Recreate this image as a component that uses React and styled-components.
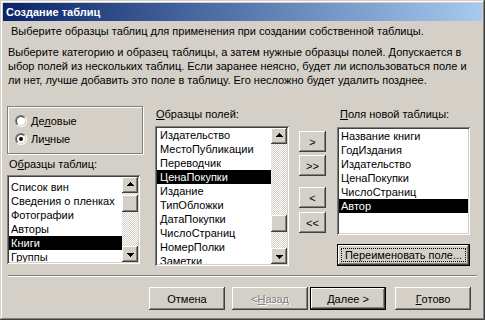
import React from "react";
import styled, { createGlobalStyle, css } from "styled-components";

const GlobalStyle = createGlobalStyle`
  html, body {
    margin: 0;
    padding: 0;
    background: #d4d0c8;
  }
  body {
    font-family: "Liberation Sans", Arial, sans-serif;
    font-size: 11px;
    color: #000;
  }
`;

const raised = css`
  box-shadow: inset -1px -1px #404040, inset 1px 1px #fff,
    inset -2px -2px #808080, inset 2px 2px #d4d0c8;
`;

const sunken = css`
  box-shadow: inset 1px 1px #808080, inset -1px -1px #fff,
    inset 2px 2px #404040, inset -2px -2px #d4d0c8;
`;

const Window = styled.div`
  width: 485px;
  height: 320px;
  box-sizing: border-box;
  padding: 3px;
  background: #d4d0c8;
  box-shadow: inset -1px -1px #404040, inset 1px 1px #d4d0c8,
    inset -2px -2px #808080, inset 2px 2px #fff;
  display: flex;
  flex-direction: column;
`;

const TitleBar = styled.div`
  height: 18px;
  flex-shrink: 0;
  display: flex;
  align-items: center;
  padding-left: 3px;
  background: linear-gradient(to right, #0a246a, #a6caf0);
  color: #fff;
  font-weight: bold;
  font-size: 11px;
`;

const Header = styled.div`
  padding: 4px 0 0 8px;
  line-height: 13px;
`;

const Intro = styled.div`
  margin-top: 7px;
  padding-left: 5px;
  line-height: 14px;
`;

const Line = styled.div`
  white-space: nowrap;
`;

const Main = styled.div`
  display: flex;
  align-items: flex-start;
  margin-top: 19px;
  padding-left: 4px;
`;

const Column = styled.div`
  display: flex;
  flex-direction: column;
  width: ${(p) => p.$width}px;
  margin-left: ${(p) => p.$offset || 0}px;
  margin-top: ${(p) => p.$top || 0}px;
`;

const GroupBox = styled.div`
  height: 48px;
  box-sizing: border-box;
  border: 1px solid #808080;
  box-shadow: inset 1px 1px #fff, 1px 1px #fff;
  padding: 5px 0 0 7px;
  display: flex;
  flex-direction: column;
`;

const RadioRow = styled.label`
  height: 18px;
  display: flex;
  align-items: center;
  gap: 4px;
`;

const RadioOuter = styled.span`
  width: 12px;
  height: 12px;
  box-sizing: border-box;
  border-radius: 50%;
  border: 1px solid;
  border-color: #808080 #fff #fff #808080;
  display: flex;
`;

const RadioInner = styled.span`
  flex: 1;
  border-radius: 50%;
  border: 1px solid;
  border-color: #404040 #d4d0c8 #d4d0c8 #404040;
  background: #fff;
  display: flex;
  align-items: center;
  justify-content: center;
  &::after {
    content: "";
    width: 4px;
    height: 4px;
    border-radius: 50%;
    background: ${(p) => (p.$checked ? "#000" : "transparent")};
  }
`;

const FieldLabel = styled.div`
  line-height: 13px;
  margin: ${(p) => p.$margin || "0"};
  padding-left: ${(p) => p.$indent || 0}px;
`;

const ListBox = styled.div`
  ${sunken};
  background: #fff;
  box-sizing: border-box;
  padding: 2px;
  height: ${(p) => p.$height}px;
  display: flex;
`;

const Items = styled.div`
  flex: 1;
  overflow: hidden;
  padding-top: ${(p) => p.$shift || 0}px;
`;

const Item = styled.div`
  height: 14px;
  line-height: 14px;
  padding-left: ${(p) => p.$indent || 2}px;
  white-space: nowrap;
  background: ${(p) => (p.$selected ? "#000" : "transparent")};
  color: ${(p) => (p.$selected ? "#fff" : "#000")};
`;

const ScrollBar = styled.div`
  width: 16px;
  flex-shrink: 0;
  display: flex;
  flex-direction: column;
`;

const ArrowButton = styled.div`
  ${raised};
  background: #d4d0c8;
  width: 16px;
  height: 16px;
  flex-shrink: 0;
  display: flex;
  align-items: center;
  justify-content: center;
`;

const Track = styled.div`
  flex: 1;
  background-image: conic-gradient(
    #fff 25%,
    #d4d0c8 0 50%,
    #fff 0 75%,
    #d4d0c8 0
  );
  background-size: 2px 2px;
`;

const Thumb = styled.div`
  ${raised};
  background: #d4d0c8;
  height: 17px;
  margin-top: ${(p) => p.$offset}px;
`;

const Arrow = ({ down }) => (
  <svg width="7" height="4" viewBox="0 0 7 4" shapeRendering="crispEdges"
    style={{ transform: down ? "translateY(1px) rotate(180deg)" : "translateY(-1px)" }}>
    <rect x="3" y="0" width="1" height="1" fill="#000" />
    <rect x="2" y="1" width="3" height="1" fill="#000" />
    <rect x="1" y="2" width="5" height="1" fill="#000" />
    <rect x="0" y="3" width="7" height="1" fill="#000" />
  </svg>
);

const Button = styled.button`
  ${raised};
  appearance: none;
  border: none;
  margin: 0;
  padding: 0;
  background: #d4d0c8;
  font-family: inherit;
  font-size: 11px;
  color: #000;
  width: ${(p) => (p.$width ? `${p.$width}px` : "100%")};
  height: ${(p) => p.$height || 23}px;
  display: flex;
  align-items: center;
  justify-content: center;
  margin-left: ${(p) => p.$gap || 0}px;
  margin-top: ${(p) => p.$top || 0}px;
  ${(p) =>
    p.$default &&
    css`
      box-shadow: inset 0 0 0 1px #000, inset -2px -2px #404040,
        inset 2px 2px #fff, inset -3px -3px #808080;
    `}
  ${(p) =>
    p.disabled &&
    css`
      color: #808080;
      text-shadow: 1px 1px #fff;
    `}
`;

const FocusLabel = styled.span`
  flex: 1;
  align-self: stretch;
  margin: 4px;
  border: 1px dotted #000;
  display: flex;
  align-items: center;
  justify-content: center;
`;

const Separator = styled.div`
  margin: 9px 5px 0;
  height: 0;
  border-top: 1px solid #808080;
  border-bottom: 1px solid #fff;
`;

const Footer = styled.div`
  display: flex;
  justify-content: flex-end;
  margin-top: 10px;
  padding-right: 11px;
`;

const tableSamples = [
  "Список вин",
  "Сведения о пленках",
  "Фотографии",
  "Авторы",
  "Книги",
  "Группы",
];

const fieldSamples = [
  "Издательство",
  "МестоПубликации",
  "Переводчик",
  "ЦенаПокупки",
  "Издание",
  "ТипОбложки",
  "ДатаПокупки",
  "ЧислоСтраниц",
  "НомерПолки",
  "Заметки",
];

const newFields = [
  "Название книги",
  "ГодИздания",
  "Издательство",
  "ЦенаПокупки",
  "ЧислоСтраниц",
  "Автор",
];

const ScrollList = ({ items, selected, height, thumb, shift, indent }) => (
  <ListBox $height={height}>
    <Items $shift={shift}>
      {items.map((t) => (
        <Item key={t} $selected={t === selected} $indent={indent}>
          {t}
        </Item>
      ))}
    </Items>
    <ScrollBar>
      <ArrowButton>
        <Arrow />
      </ArrowButton>
      <Track>
        <Thumb $offset={thumb} />
      </Track>
      <ArrowButton>
        <Arrow down />
      </ArrowButton>
    </ScrollBar>
  </ListBox>
);

const Radio = ({ checked, children }) => (
  <RadioRow>
    <RadioOuter>
      <RadioInner $checked={checked} />
    </RadioOuter>
    <span>{children}</span>
  </RadioRow>
);

export default function App() {
  return (
    <>
      <GlobalStyle />
      <Window>
        <TitleBar>Создание таблиц</TitleBar>
        <Header>
          Выберите образцы таблиц для применения при создании собственной
          таблицы.
        </Header>
        <Intro>
          <Line>
            Выберите категорию и образец таблицы, а затем нужные образцы полей.
            Допускается в
          </Line>
          <Line>
            ыбор полей из нескольких таблиц. Если заранее неясно, будет ли
            использоваться поле и
          </Line>
          <Line>
            ли нет, лучше добавить это поле в таблицу. Его несложно будет
            удалить позднее.
          </Line>
        </Intro>

        <Main>
          <Column $width={136}>
            <GroupBox>
              <Radio>
                Де<u>л</u>овые
              </Radio>
              <Radio checked>
                Ли<u>ч</u>ные
              </Radio>
            </GroupBox>
            <FieldLabel $margin="4px 0 4px" $indent={2}>
              О<u>б</u>разцы таблиц:
            </FieldLabel>
            <div style={{ width: 133 }}>
              <ScrollList
                items={tableSamples}
                selected="Книги"
                height={89}
                thumb={2}
                shift={3}
              />
            </div>
          </Column>

          <Column $width={134} $offset={12}>
            <FieldLabel $margin="2px 0 5px" $indent={1}>
              <u>О</u>бразцы полей:
            </FieldLabel>
            <ScrollList
              items={fieldSamples}
              selected="ЦенаПокупки"
              height={140}
              thumb={71}
              indent={3}
            />
          </Column>

          <Column $width={27} $offset={10} $top={25}>
            <Button $height={21}>&gt;</Button>
            <Button $height={21} $top={3}>&gt;&gt;</Button>
            <Button $height={21} $top={11}>&lt;</Button>
            <Button $height={21} $top={4}>&lt;&lt;</Button>
          </Column>

          <Column $width={133} $offset={11}>
            <FieldLabel $margin="2px 0 6px" $indent={3}>
              <u>П</u>оля новой таблицы:
            </FieldLabel>
            <ListBox $height={108}>
              <Items>
                {newFields.map((t) => (
                  <Item key={t} $selected={t === "Автор"}>
                    {t}
                  </Item>
                ))}
              </Items>
            </ListBox>
            <Button $default $height={22} $top={9}>
              <FocusLabel>Переименовать поле...</FocusLabel>
            </Button>
          </Column>
        </Main>

        <Separator />

        <Footer>
          <Button $width={76}>Отмена</Button>
          <Button $width={76} $gap={7} disabled>
            &lt; <u>Н</u>азад
          </Button>
          <Button $width={76} $gap={2} $default>
            <u>Д</u>алее &gt;
          </Button>
          <Button $width={76} $gap={9}>
            <u>Г</u>отово
          </Button>
        </Footer>
      </Window>
    </>
  );
}
